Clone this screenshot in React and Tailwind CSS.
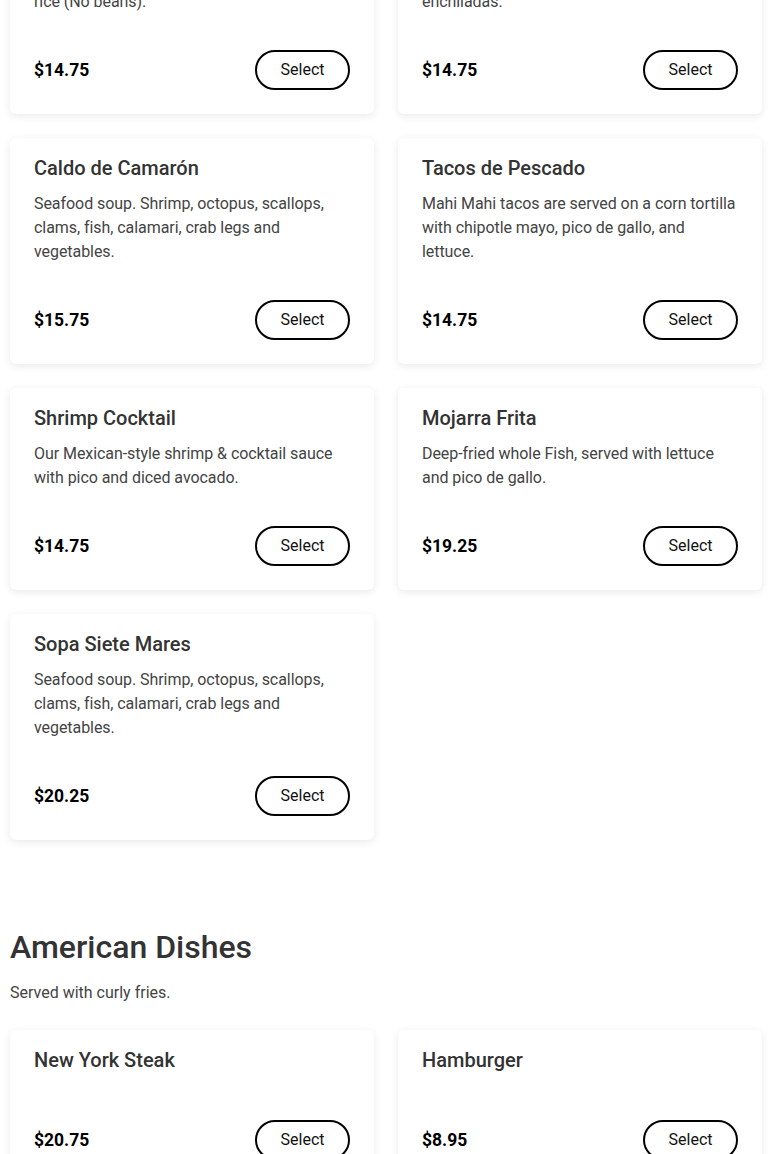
import React from "react";

const seafood = [
  {
    name: "Enchiladas Rancheras",
    description: "Chicken enchiladas served with Mexican\nrice (No beans).",
    price: "$14.75",
  },
  {
    name: "Enchiladas de Camarón",
    description: "Shrimp sautéed with onions, rolled in\nenchiladas.",
    price: "$14.75",
  },
  {
    name: "Caldo de Camarón",
    description: "Seafood soup. Shrimp, octopus, scallops, clams, fish, calamari, crab legs and vegetables.",
    price: "$15.75",
  },
  {
    name: "Tacos de Pescado",
    description: "Mahi Mahi tacos are served on a corn tortilla with chipotle mayo, pico de gallo, and lettuce.",
    price: "$14.75",
  },
  {
    name: "Shrimp Cocktail",
    description: "Our Mexican-style shrimp & cocktail sauce with pico and diced avocado.",
    price: "$14.75",
  },
  {
    name: "Mojarra Frita",
    description: "Deep-fried whole Fish, served with lettuce and pico de gallo.",
    price: "$19.25",
  },
  {
    name: "Sopa Siete Mares",
    description: "Seafood soup. Shrimp, octopus, scallops, clams, fish, calamari, crab legs and vegetables.",
    price: "$20.25",
  },
];

const american = [
  { name: "New York Steak", description: "", price: "$20.75" },
  { name: "Hamburger", description: "", price: "$8.95" },
];

function MenuCard({ item }) {
  return (
    <div className="bg-white rounded-md shadow-[0_2px_8px_rgba(0,0,0,0.09)] px-6 pt-[18px] pb-6 flex flex-col">
      <h3 className="text-[20px] leading-6 font-medium text-[#333333] mb-3">
        {item.name}
      </h3>
      <p className="text-base leading-6 tracking-[-0.06px] whitespace-pre-line text-[#444444] mb-9 flex-1">
        {item.description}
      </p>
      <div className="flex items-center justify-between">
        <span className="text-[17.5px] font-bold text-black">{item.price}</span>
        <button className="w-[95px] h-10 rounded-full border-2 border-black text-base text-[#111111] bg-white">
          Select
        </button>
      </div>
    </div>
  );
}

export default function App() {
  return (
    <div
      className="min-h-screen bg-white overflow-hidden px-[10px]"
      style={{ fontFamily: "Roboto, 'Liberation Sans', sans-serif" }}
    >
      {/* Seafood (scrolled part) */}
      <div className="grid grid-cols-2 gap-6 -mt-[88px]">
        {seafood.map((item) => (
          <MenuCard key={item.name} item={item} />
        ))}
      </div>

      {/* American Dishes */}
      <section className="mt-[89px]">
        <h2 className="text-[32px] leading-9 font-medium text-[#333333]">
          American Dishes
        </h2>
        <p className="text-base leading-6 text-[#444444] mt-4">
          Served with curly fries.
        </p>
        <div className="grid grid-cols-2 gap-6 mt-[25px] pb-10">
          {american.map((item) => (
            <MenuCard key={item.name} item={item} />
          ))}
        </div>
      </section>
    </div>
  );
}
